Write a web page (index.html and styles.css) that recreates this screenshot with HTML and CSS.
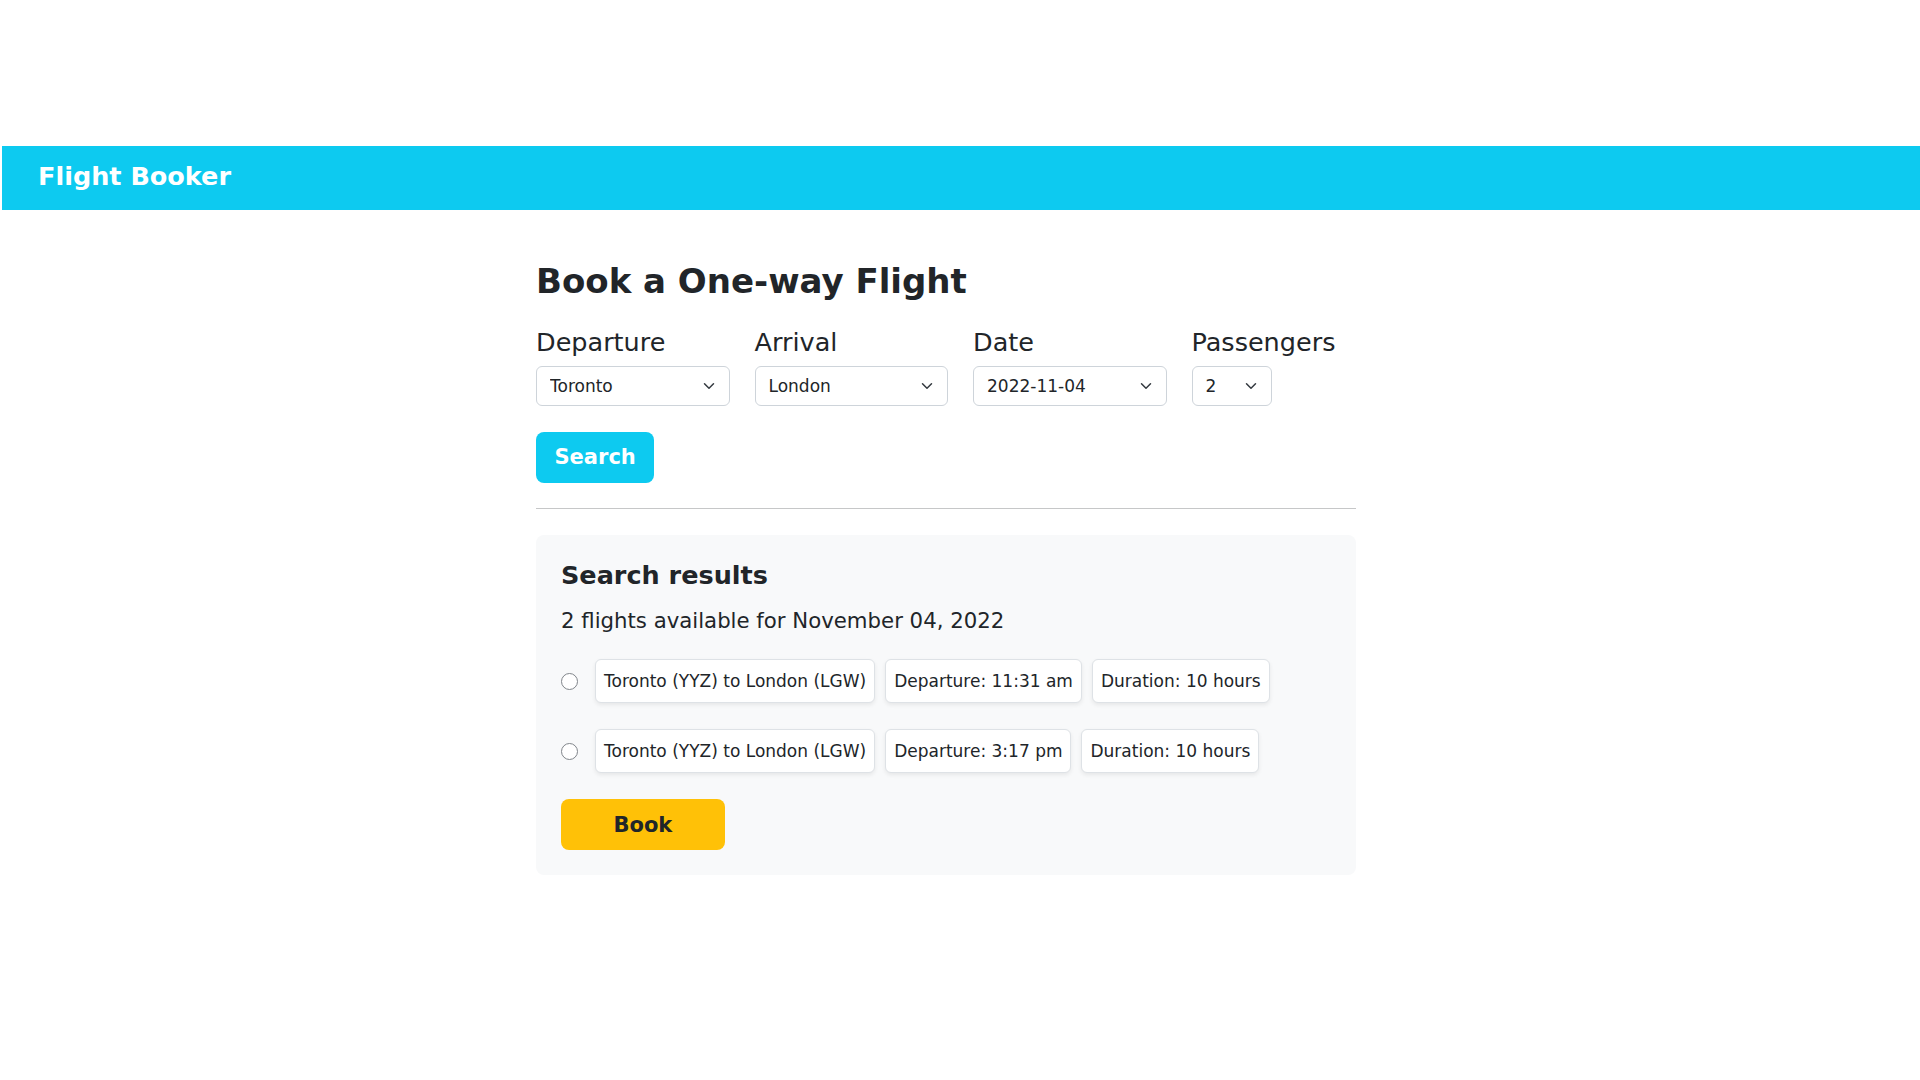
FILE: index.html
```html
<!DOCTYPE html>
<html lang="en">
<head>
    <meta charset="UTF-8">
    <meta name="viewport" content="width=device-width, initial-scale=1.0">
    <title>Flight Booker</title>
    <link rel="stylesheet" href="styles.css">
</head>
<body>
    <header class="navbar">
        <span class="brand">Flight Booker</span>
    </header>

    <main class="container">
        <h1>Book a One-way Flight</h1>

        <div class="search-form">
            <div class="field">
                <label for="departure">Departure</label>
                <div class="select-wrap">
                    <select id="departure">
                        <option>Toronto</option>
                        <option>London</option>
                    </select>
                    <svg class="chevron" width="12" height="12" viewBox="0 0 16 16"><path d="M2 5l6 6 6-6" fill="none" stroke="#343a40" stroke-width="2" stroke-linecap="round" stroke-linejoin="round"/></svg>
                </div>
            </div>
            <div class="field">
                <label for="arrival">Arrival</label>
                <div class="select-wrap">
                    <select id="arrival">
                        <option>London</option>
                        <option>Toronto</option>
                    </select>
                    <svg class="chevron" width="12" height="12" viewBox="0 0 16 16"><path d="M2 5l6 6 6-6" fill="none" stroke="#343a40" stroke-width="2" stroke-linecap="round" stroke-linejoin="round"/></svg>
                </div>
            </div>
            <div class="field">
                <label for="date">Date</label>
                <div class="select-wrap">
                    <select id="date">
                        <option>2022-11-04</option>
                        <option>2022-11-05</option>
                    </select>
                    <svg class="chevron" width="12" height="12" viewBox="0 0 16 16"><path d="M2 5l6 6 6-6" fill="none" stroke="#343a40" stroke-width="2" stroke-linecap="round" stroke-linejoin="round"/></svg>
                </div>
            </div>
            <div class="field">
                <label for="passengers">Passengers</label>
                <div class="select-wrap small">
                    <select id="passengers">
                        <option>1</option>
                        <option selected>2</option>
                        <option>3</option>
                    </select>
                    <svg class="chevron" width="12" height="12" viewBox="0 0 16 16"><path d="M2 5l6 6 6-6" fill="none" stroke="#343a40" stroke-width="2" stroke-linecap="round" stroke-linejoin="round"/></svg>
                </div>
            </div>
        </div>

        <button class="btn btn-search">Search</button>

        <hr>

        <section class="results">
            <h4>Search results</h4>
            <p class="lead">2 flights available for November 04, 2022</p>

            <label class="flight">
                <input type="radio" name="flight">
                <span class="pill">Toronto (YYZ) to London (LGW)</span>
                <span class="pill">Departure: 11:31 am</span>
                <span class="pill">Duration: 10 hours</span>
            </label>
            <label class="flight">
                <input type="radio" name="flight">
                <span class="pill">Toronto (YYZ) to London (LGW)</span>
                <span class="pill">Departure: 3:17 pm</span>
                <span class="pill">Duration: 10 hours</span>
            </label>

            <button class="btn btn-book">Book</button>
        </section>
    </main>
</body>
</html>
```

FILE: styles.css
```css
/* General */
body {
    margin: 0;
    font-family: "DejaVu Sans", sans-serif;
    color: #212529;
    background: #fff;
}

/* Top bar */
.navbar {
    margin: 146px 0 0 2px;
    height: 64px;
    box-sizing: border-box;
    padding: 0 0 4px 36px;
    display: flex;
    align-items: center;
    background: #0dcaf0;
}

.brand {
    color: #fff;
    font-size: 25.5px;
    font-weight: bold;
}

/* Main column */
.container {
    width: 820px;
    margin-left: calc(50% - 424px);
}

h1 {
    margin: 51px 0 25px;
    font-size: 34px;
    line-height: 1.2;
}

/* Search form */
.search-form {
    display: flex;
    gap: 25px;
}

.field {
    display: flex;
    flex-direction: column;
    gap: 9px;
}

.field label {
    font-size: 25.5px;
    line-height: 30px;
}

.select-wrap {
    position: relative;
    width: 193.5px;
}

.select-wrap.small {
    width: 80px;
}

.select-wrap select {
    appearance: none;
    width: 100%;
    height: 40px;
    box-sizing: border-box;
    padding: 7px 36px 7px 13px;
    border: 1px solid #ced4da;
    border-radius: 6px;
    background: #fff;
    font-family: inherit;
    font-size: 17px;
    line-height: 24px;
    color: #212529;
}

.chevron {
    position: absolute;
    right: 15px;
    top: 14px;
    pointer-events: none;
}

/* Buttons */
.btn {
    display: block;
    height: 51px;
    border: none;
    border-radius: 8px;
    font-family: inherit;
    font-size: 21px;
    font-weight: bold;
    cursor: pointer;
}

.btn-search {
    margin-top: 26px;
    padding: 0 18.5px;
    background: #0dcaf0;
    color: #fff;
}

.btn-book {
    padding: 0 52.5px;
    background: #ffc107;
    color: #212529;
}

hr {
    margin: 25px 0 26px;
    border: none;
    border-top: 1px solid #c6c7c8;
}

/* Results box */
.results {
    padding: 24px 24px 25px 25px;
    background: #f8f9fa;
    border-radius: 8px;
}

.results h4 {
    margin: 1px 0 15px;
    font-size: 25.5px;
    line-height: 30px;
}

.lead {
    margin: 0 0 22.5px;
    font-size: 21.25px;
    line-height: 1.5;
}

.flight {
    display: flex;
    align-items: center;
    gap: 10px;
    margin-bottom: 26px;
}

.flight input {
    appearance: none;
    width: 17px;
    height: 17px;
    margin: 0 7px 0 0;
    border: 1px solid #80858a;
    border-radius: 50%;
    background: #fff;
}

.pill {
    padding: 9px 8px;
    font-size: 17px;
    line-height: 24px;
    background: #fff;
    border: 1px solid #dee2e6;
    border-radius: 6px;
    box-shadow: 0 2px 4px rgba(0, 0, 0, 0.075);
}
```
